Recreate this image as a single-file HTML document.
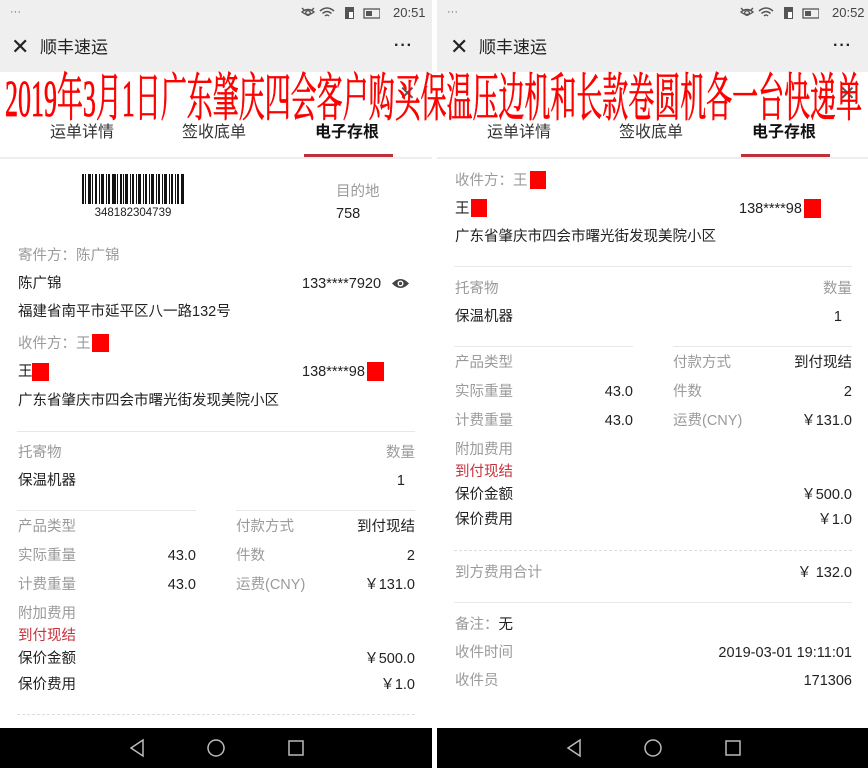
<!DOCTYPE html>
<html><head><meta charset="utf-8">
<style>
*{margin:0;padding:0;box-sizing:border-box}
body{width:868px;height:768px;position:relative;background:#fff;overflow:hidden;font-family:"Liberation Sans","Noto Sans CJK SC",sans-serif;color:#222}
.p{position:absolute;top:0;width:432px;height:768px;background:#fff;overflow:hidden}
.sb{position:absolute;left:0;top:0;width:100%;height:72px;background:#efefef}
.t{position:absolute;line-height:20px;font-size:14.5px;white-space:nowrap}
.g{color:#9a9a9a}
.r{text-align:right}
.ln{position:absolute;height:1px;background:#e8e8e8}
.dl{position:absolute;height:0;border-top:1px dashed #ddd}
.red{position:absolute;background:#f00}
.nav{position:absolute;left:0;top:728px;width:100%;height:40px;background:#000}
.tab{position:absolute;top:123px;font-size:16px;line-height:20px;color:#333}
</style></head><body>

<!-- LEFT PANEL -->
<div class="p" style="left:0">
 <div class="sb"></div>
 <div class="t" style="left:10px;top:2px;font-size:11px;color:#666">···</div>
 <svg style="position:absolute;left:300px;top:4px" width="80" height="17" viewBox="0 0 80 17">
  <g fill="none" stroke="#555" stroke-width="1.4"><path d="M2 8 Q8 3 14 8 Q8 13 2 8Z"/><circle cx="8" cy="9" r="2.3"/><path d="M2 4 L4 6 M14 4 L12 6"/></g>
  <g fill="none" stroke="#555" stroke-width="1.5"><path d="M20 7 Q27 1 34 7"/><path d="M22.5 9.5 Q27 5.5 31.5 9.5"/><path d="M25 12 Q27 10 29 12"/></g>
  <rect x="45" y="3" width="9" height="12" fill="#555"/><rect x="49" y="8" width="4" height="6" fill="#fff"/>
  <rect x="64" y="5" width="16" height="9" fill="none" stroke="#555" stroke-width="1.3"/><rect x="66" y="7" width="6" height="5" fill="#555"/>
 </svg>
 <div class="t" style="left:393px;top:3px;font-size:13px;color:#444">20:51</div>
 <div class="t" style="left:11px;top:37px;font-size:22px;color:#222">✕</div>
 <div class="t" style="left:40px;top:38px;font-size:17px">顺丰速运</div>
 <div class="t" style="left:394px;top:36px;font-size:16px;font-weight:bold;letter-spacing:1px">···</div>
 <div class="t" style="left:399px;top:84px;font-size:20px;color:#555">✕</div>
 <div class="tab" style="left:50px">运单详情</div>
 <div class="tab" style="left:182px">签收底单</div>
 <div class="tab" style="left:315px;font-weight:bold;color:#111">电子存根</div>
 <div style="position:absolute;left:304px;top:154px;width:89px;height:3px;background:#c0303c"></div>
 <div style="position:absolute;left:0;top:157px;width:100%;height:2px;background:#eee"></div>

 <svg style="position:absolute;left:82px;top:174px" width="102" height="30">
  <g fill="#111">
   <rect x="0" y="0" width="2" height="30"/><rect x="3" y="0" width="1" height="30"/><rect x="6" y="0" width="3" height="30"/><rect x="10" y="0" width="1" height="30"/><rect x="13" y="0" width="2" height="30"/><rect x="17" y="0" width="1" height="30"/><rect x="19" y="0" width="3" height="30"/><rect x="24" y="0" width="1" height="30"/><rect x="26" y="0" width="2" height="30"/><rect x="30" y="0" width="4" height="30"/><rect x="35" y="0" width="1" height="30"/><rect x="38" y="0" width="2" height="30"/><rect x="41" y="0" width="1" height="30"/><rect x="43" y="0" width="3" height="30"/><rect x="48" y="0" width="1" height="30"/><rect x="50" y="0" width="2" height="30"/><rect x="54" y="0" width="1" height="30"/><rect x="56" y="0" width="3" height="30"/><rect x="61" y="0" width="1" height="30"/><rect x="63" y="0" width="2" height="30"/><rect x="67" y="0" width="1" height="30"/><rect x="69" y="0" width="3" height="30"/><rect x="74" y="0" width="1" height="30"/><rect x="76" y="0" width="2" height="30"/><rect x="80" y="0" width="1" height="30"/><rect x="82" y="0" width="3" height="30"/><rect x="87" y="0" width="1" height="30"/><rect x="89" y="0" width="2" height="30"/><rect x="93" y="0" width="1" height="30"/><rect x="95" y="0" width="2" height="30"/><rect x="99" y="0" width="3" height="30"/>
  </g>
 </svg>
 <div class="t" style="left:82px;top:204px;width:102px;text-align:center;font-size:11.5px;line-height:18px">348182304739</div>
 <div class="t g" style="left:336px;top:182px">目的地</div>
 <div class="t" style="left:336px;top:204px">758</div>

 <div class="t g" style="left:18px;top:246px">寄件方：陈广锦</div>
 <div class="t" style="left:18px;top:274px">陈广锦</div>
 <div class="t" style="left:302px;top:274px">133****7920</div>
 <svg style="position:absolute;left:391px;top:277px" width="19" height="13" viewBox="0 0 19 13"><path d="M1 6.5 Q9.5 -2.5 18 6.5 Q9.5 15.5 1 6.5Z" fill="#444"/><circle cx="9.5" cy="6.5" r="3" fill="#fff"/><circle cx="9.5" cy="6.5" r="1.6" fill="#444"/></svg>
 <div class="t" style="left:18px;top:302px">福建省南平市延平区八一路132号</div>
 <div class="t g" style="left:18px;top:334px">收件方：王</div>
 <div class="red" style="left:92px;top:334px;width:17px;height:18px"></div>
 <div class="t" style="left:18px;top:362px">王</div>
 <div class="red" style="left:32px;top:363px;width:17px;height:18px"></div>
 <div class="t" style="left:302px;top:362px">138****98</div>
 <div class="red" style="left:367px;top:362px;width:17px;height:19px"></div>
 <div class="t" style="left:18px;top:391px">广东省肇庆市四会市曙光街发现美院小区</div>
 <div class="ln" style="left:17px;top:431px;width:398px"></div>
 <div class="t g" style="left:18px;top:443px">托寄物</div>
 <div class="t g r" style="left:315px;top:443px;width:100px">数量</div>
 <div class="t" style="left:18px;top:471px">保温机器</div>
 <div class="t r" style="left:305px;top:471px;width:100px">1</div>
 <div class="ln" style="left:17px;top:510px;width:179px"></div>
 <div class="ln" style="left:236px;top:510px;width:179px"></div>
 <div class="t g" style="left:18px;top:517px">产品类型</div>
 <div class="t g" style="left:236px;top:517px">付款方式</div>
 <div class="t r" style="left:315px;top:517px;width:100px">到付现结</div>
 <div class="t g" style="left:18px;top:546px">实际重量</div>
 <div class="t r" style="left:96px;top:546px;width:100px">43.0</div>
 <div class="t g" style="left:236px;top:546px">件数</div>
 <div class="t r" style="left:315px;top:546px;width:100px">2</div>
 <div class="t g" style="left:18px;top:575px">计费重量</div>
 <div class="t r" style="left:96px;top:575px;width:100px">43.0</div>
 <div class="t g" style="left:236px;top:575px">运费(CNY)</div>
 <div class="t r" style="left:315px;top:575px;width:100px">￥131.0</div>
 <div class="t g" style="left:18px;top:604px">附加费用</div>
 <div class="t" style="left:18px;top:626px;color:#c8323c">到付现结</div>
 <div class="t" style="left:18px;top:649px">保价金额</div>
 <div class="t r" style="left:315px;top:649px;width:100px">￥500.0</div>
 <div class="t" style="left:18px;top:675px">保价费用</div>
 <div class="t r" style="left:315px;top:675px;width:100px">￥1.0</div>
 <div class="dl" style="left:17px;top:714px;width:398px"></div>
 <div class="nav">
  <svg style="position:absolute;left:0;top:0" width="432" height="40"><g fill="none" stroke="#bbb" stroke-width="1.5"><path d="M143 12 L131 20 L143 28Z"/><ellipse cx="216" cy="20" rx="8" ry="8"/><rect x="289" y="13" width="14" height="14"/></g></svg>
 </div>
</div>

<!-- RIGHT PANEL -->
<div class="p" style="left:437px;width:431px">
 <div class="sb"></div>
 <div class="t" style="left:10px;top:2px;font-size:11px;color:#666">···</div>
 <svg style="position:absolute;left:302px;top:4px" width="80" height="17" viewBox="0 0 80 17">
  <g fill="none" stroke="#555" stroke-width="1.4"><path d="M2 8 Q8 3 14 8 Q8 13 2 8Z"/><circle cx="8" cy="9" r="2.3"/><path d="M2 4 L4 6 M14 4 L12 6"/></g>
  <g fill="none" stroke="#555" stroke-width="1.5"><path d="M20 7 Q27 1 34 7"/><path d="M22.5 9.5 Q27 5.5 31.5 9.5"/><path d="M25 12 Q27 10 29 12"/></g>
  <rect x="45" y="3" width="9" height="12" fill="#555"/><rect x="49" y="8" width="4" height="6" fill="#fff"/>
  <rect x="64" y="5" width="16" height="9" fill="none" stroke="#555" stroke-width="1.3"/><rect x="66" y="7" width="6" height="5" fill="#555"/>
 </svg>
 <div class="t" style="left:395px;top:3px;font-size:13px;color:#444">20:52</div>
 <div class="t" style="left:13px;top:37px;font-size:22px;color:#222">✕</div>
 <div class="t" style="left:42px;top:38px;font-size:17px">顺丰速运</div>
 <div class="t" style="left:396px;top:36px;font-size:16px;font-weight:bold;letter-spacing:1px">···</div>
 <div class="t" style="left:402px;top:84px;font-size:20px;color:#555">✕</div>
 <div class="tab" style="left:50px">运单详情</div>
 <div class="tab" style="left:182px">签收底单</div>
 <div class="tab" style="left:315px;font-weight:bold;color:#111">电子存根</div>
 <div style="position:absolute;left:304px;top:154px;width:89px;height:3px;background:#c0303c"></div>
 <div style="position:absolute;left:0;top:157px;width:100%;height:2px;background:#eee"></div>

 <div class="t g" style="left:18px;top:171px">收件方：王</div>
 <div class="red" style="left:93px;top:171px;width:16px;height:18px"></div>
 <div class="t" style="left:18px;top:199px">王</div>
 <div class="red" style="left:34px;top:199px;width:16px;height:18px"></div>
 <div class="t" style="left:302px;top:199px">138****98</div>
 <div class="red" style="left:367px;top:199px;width:17px;height:19px"></div>
 <div class="t" style="left:18px;top:227px">广东省肇庆市四会市曙光街发现美院小区</div>
 <div class="ln" style="left:17px;top:266px;width:398px"></div>
 <div class="t g" style="left:18px;top:279px">托寄物</div>
 <div class="t g r" style="left:315px;top:279px;width:100px">数量</div>
 <div class="t" style="left:18px;top:307px">保温机器</div>
 <div class="t r" style="left:305px;top:307px;width:100px">1</div>
 <div class="ln" style="left:17px;top:346px;width:179px"></div>
 <div class="ln" style="left:236px;top:346px;width:179px"></div>
 <div class="t g" style="left:18px;top:353px">产品类型</div>
 <div class="t g" style="left:236px;top:353px">付款方式</div>
 <div class="t r" style="left:315px;top:353px;width:100px">到付现结</div>
 <div class="t g" style="left:18px;top:382px">实际重量</div>
 <div class="t r" style="left:96px;top:382px;width:100px">43.0</div>
 <div class="t g" style="left:236px;top:382px">件数</div>
 <div class="t r" style="left:315px;top:382px;width:100px">2</div>
 <div class="t g" style="left:18px;top:411px">计费重量</div>
 <div class="t r" style="left:96px;top:411px;width:100px">43.0</div>
 <div class="t g" style="left:236px;top:411px">运费(CNY)</div>
 <div class="t r" style="left:315px;top:411px;width:100px">￥131.0</div>
 <div class="t g" style="left:18px;top:440px">附加费用</div>
 <div class="t" style="left:18px;top:462px;color:#c8323c">到付现结</div>
 <div class="t" style="left:18px;top:485px">保价金额</div>
 <div class="t r" style="left:315px;top:485px;width:100px">￥500.0</div>
 <div class="t" style="left:18px;top:510px">保价费用</div>
 <div class="t r" style="left:315px;top:510px;width:100px">￥1.0</div>
 <div class="dl" style="left:17px;top:550px;width:398px"></div>
 <div class="t g" style="left:18px;top:563px">到方费用合计</div>
 <div class="t r" style="left:305px;top:563px;width:110px">￥ 132.0</div>
 <div class="ln" style="left:17px;top:602px;width:398px"></div>
 <div class="t" style="left:18px;top:615px"><span class="g">备注：</span>无</div>
 <div class="t g" style="left:18px;top:643px">收件时间</div>
 <div class="t r" style="left:215px;top:643px;width:200px">2019-03-01 19:11:01</div>
 <div class="t g" style="left:18px;top:671px">收件员</div>
 <div class="t r" style="left:315px;top:671px;width:100px">171306</div>
 <div class="nav">
  <svg style="position:absolute;left:0;top:0" width="431" height="40"><g fill="none" stroke="#bbb" stroke-width="1.5"><path d="M143 12 L131 20 L143 28Z"/><ellipse cx="216" cy="20" rx="8" ry="8"/><rect x="289" y="13" width="14" height="14"/></g></svg>
 </div>
</div>

<!-- Title overlay -->
<svg style="position:absolute;left:0;top:60px" width="868" height="66">
 <text x="5" y="56" textLength="857" lengthAdjust="spacingAndGlyphs" font-family="'Liberation Serif','Noto Serif CJK SC',serif" font-size="52" fill="#ff0000" stroke="#ff0000" stroke-width="0.8">2019年3月1日广东肇庆四会客户购买保温压边机和长款卷圆机各一台快递单</text>
</svg>
</body></html>
